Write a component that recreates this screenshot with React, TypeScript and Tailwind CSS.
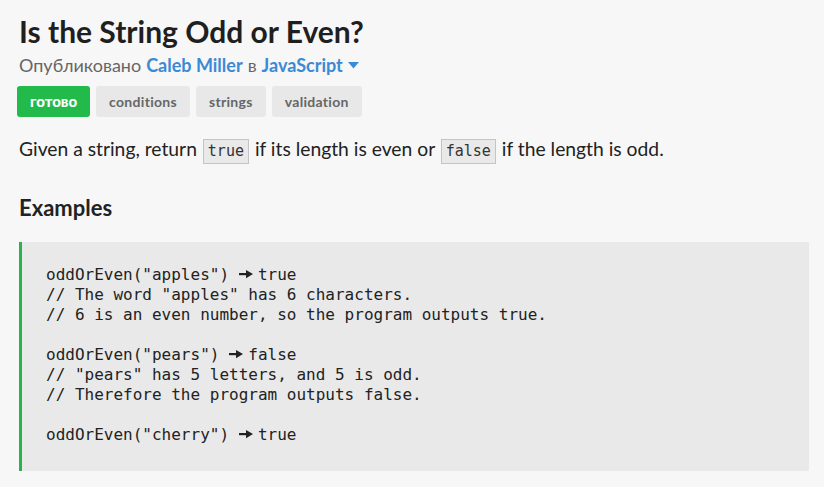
const tags = ["conditions", "strings", "validation"];

const codeLines = [
  ['oddOrEven("apples") ', true, " true"],
  ['// The word "apples" has 6 characters.'],
  ["// 6 is an even number, so the program outputs true."],
  [""],
  ['oddOrEven("pears") ', true, " false"],
  ['// "pears" has 5 letters, and 5 is odd.'],
  ["// Therefore the program outputs false."],
  [""],
  ['oddOrEven("cherry") ', true, " true"],
] as const;

function InlineCode({ children }: { children: string }) {
  return (
    <code className="mx-[1px] inline-block border border-[#c4c4c4] bg-[#e9e9e9] px-[4px] font-['DejaVu_Sans_Mono',monospace] text-[15px] leading-[23px] text-[#333] align-middle">
      {children}
    </code>
  );
}

// heavy arrow like ➞, drawn wider than one mono cell
function Arrow() {
  return (
    <svg width="14" height="10" viewBox="0 0 14 10" className="mr-[-4.4px] inline-block align-[1px]">
      <rect x="0" y="4" width="8" height="2.2" fill="#222" />
      <path d="M7 1 L14 5.1 L7 9.2 Z" fill="#222" />
    </svg>
  );
}

export default function App() {
  return (
    <div className="min-h-[487px] bg-[#f7f7f7] px-[19px] pt-[11px] font-['Lato',sans-serif] text-[#222]">
      <h1 className="text-[30px] font-bold leading-[40px] text-[#1f1f1f]">Is the String Odd or Even?</h1>

      <div className="mt-[2px] flex items-center text-[18px] leading-[24px] text-[#666]">
        <span>Опубликовано</span>
        <a className="ml-[5px] font-bold text-[#3b8ad6]">Caleb Miller</a>
        <span className="ml-[5px]">в</span>
        <a className="ml-[5px] flex items-center font-bold text-[#3b8ad6]">
          JavaScript
          <svg width="11" height="7" viewBox="0 0 11 7" className="ml-[5px] mt-[1px]">
            <path d="M0 0 L11 0 L5.5 6.5 Z" fill="#3b8ad6" />
          </svg>
        </a>
      </div>

      <div className="-ml-[2px] mt-[9px] flex gap-[6px]">
        <span className="flex h-[31px] items-center rounded-[3px] bg-[#22bb4b] px-[13px] text-[15px] font-black text-white">
          готово
        </span>
        {tags.map((t) => (
          <span
            key={t}
            className="flex h-[31px] items-center rounded-[3px] bg-[#e8e8e8] px-[13px] text-[14px] font-bold tracking-[0.3px] text-[#666]"
          >
            {t}
          </span>
        ))}
      </div>

      <p className="mt-[18px] text-[19.3px] leading-[27px] text-[#222]">
        Given a string, return <InlineCode>true</InlineCode> if its length is even or{" "}
        <InlineCode>false</InlineCode> if the length is odd.
      </p>

      <h2 className="mt-[29px] text-[22px] font-bold leading-[30px] text-[#222]">Examples</h2>

      <pre className="mt-[19px] w-[790px] border-l-[3px] border-[#2bb24c] bg-[#e9e9e9] pb-[26px] pl-[24px] pt-[23px] font-['DejaVu_Sans_Mono',monospace] text-[16px] leading-[20px] text-[#222]">
        {codeLines.map((l, i) => (
          <div key={i} className="h-[20px]">
            {l[0]}
            {l[1] && <Arrow />}
            {l[2]}
          </div>
        ))}
      </pre>
    </div>
  );
}
